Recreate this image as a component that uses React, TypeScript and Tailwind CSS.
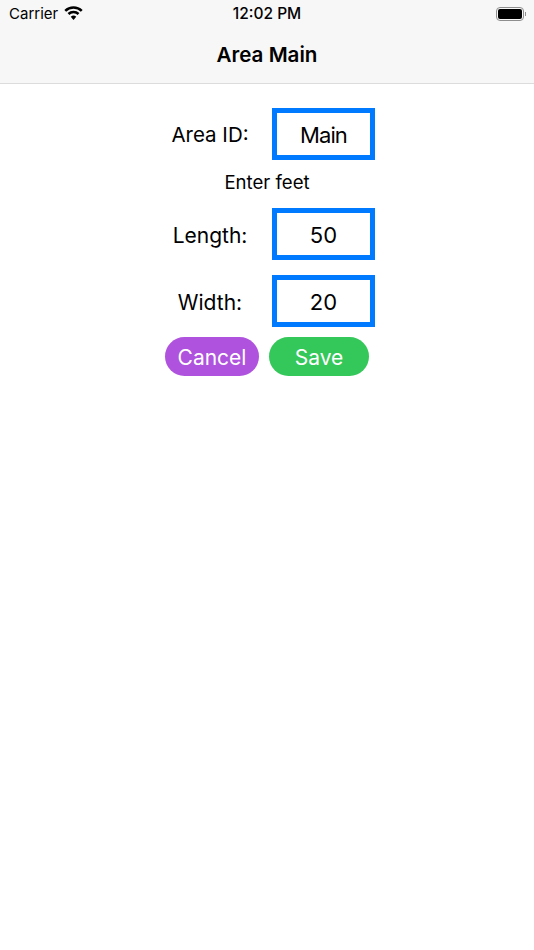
import { Fragment } from 'react';

const fields = [
  { label: 'Area ID:', value: 'Main', mt: 'mt-0', labelSize: 'text-[20.5px]', valueClass: 'tracking-[-0.9px]' },
  { label: 'Length:', value: '50', mt: 'mt-0', labelSize: 'text-[21px]', valueClass: '' },
  { label: 'Width:', value: '20', mt: 'mt-[15px]', labelSize: 'text-[21px]', valueClass: '' },
];

function StatusBar() {
  return (
    <div className="flex h-[28px] items-center justify-between pl-[9px] pr-[8px] text-[15px] text-black">
      <div className="flex items-center gap-[6px]">
        <span>Carrier</span>
        <svg width="19" height="14" viewBox="0 0 18.5 14" fill="none" className="mb-[2px]">
          <path d="M1 4.800A11.700 11.700 0 0 1 17.500 4.800" stroke="#000" strokeWidth="2.500" />
          <path d="M4.200 8A7.200 7.200 0 0 1 14.300 8" stroke="#000" strokeWidth="2.500" />
          <path d="M6.500 10.700A4.200 4.200 0 0 1 12 10.700L9.250 14Z" fill="#000" />
        </svg>
      </div>
      <span className="absolute left-1/2 -translate-x-1/2 text-[15.5px] font-medium">12:02 PM</span>
      <div className="flex items-center">
        <div className="flex h-[14px] w-[28px] items-center justify-center rounded-[4px] border border-[#8e8e8e]">
          <div className="h-[10px] w-[24px] rounded-[2px] bg-black" />
        </div>
        <div className="ml-[1px] h-[4px] w-[1px] bg-[#8e8e8e]" />
      </div>
    </div>
  );
}

export default function App() {
  return (
    <div className="relative min-h-[950px] bg-white font-['Inter','Liberation_Sans',sans-serif]">
      {/* header */}
      <div className="h-[84px] border-b border-[#dcdcdc] bg-[#f7f7f7]">
        <StatusBar />
        <div className="mt-[6px] text-center text-[20.6px] leading-[42px] font-semibold text-black">Area Main</div>
      </div>

      {/* form */}
      <div className="ml-[148px] w-[227px] pt-[24px] text-black">
        {fields.map((f, i) => (
          <Fragment key={f.label}>
            <div className={`flex items-center ${f.mt}`}>
              <span className={`w-[124px] pt-[3px] text-center ${f.labelSize}`}>{f.label}</span>
              <div className={`flex h-[52px] w-[103px] items-center justify-center border-[5px] border-[#007aff] pt-[2px] text-[22px] ${f.valueClass}`}>
                {f.value}
              </div>
            </div>
            {i === 0 && <div className="ml-[11px] h-[48px] text-center text-[18.6px] leading-[45px]">Enter feet</div>}
          </Fragment>
        ))}
      </div>

      <div className="mt-[10px] ml-[165px] flex gap-[10px] text-[21px] text-white">
        <button className="h-[39px] w-[94px] rounded-full bg-[#af52de] pt-[2px]">Cancel</button>
        <button className="h-[39px] w-[100px] rounded-full bg-[#34c759] pt-[2px]">Save</button>
      </div>
    </div>
  );
}
